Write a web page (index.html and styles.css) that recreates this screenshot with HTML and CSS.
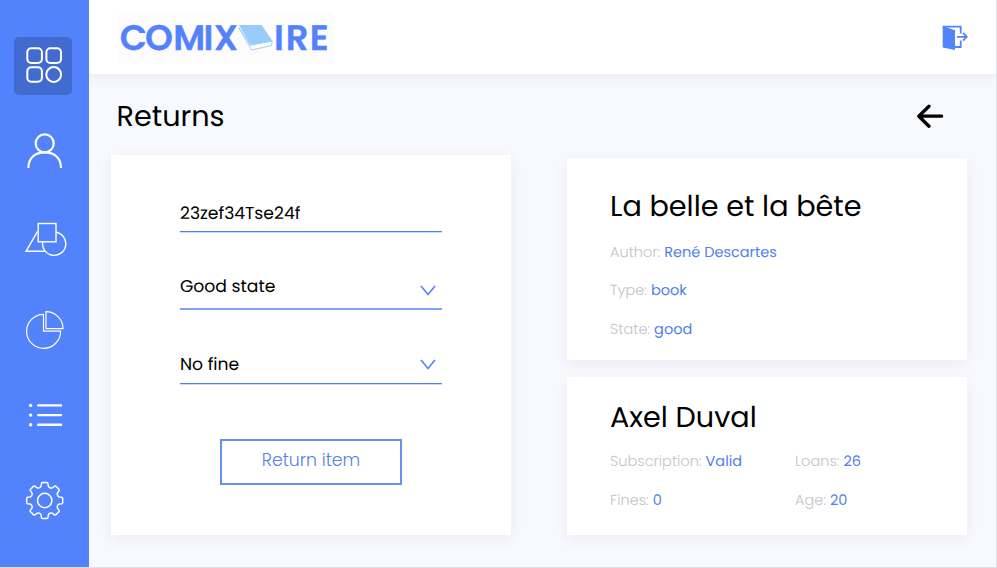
FILE: index.html
```html
<!DOCTYPE html>
<html lang="en">
<head>
<meta charset="utf-8">
<title>Comixaire - Returns</title>
<link rel="stylesheet" href="styles.css">
</head>
<body>
<div class="app">
  <nav class="sidebar">
    <a class="nav-item active"><svg viewBox="14 37 58 58"><g stroke-width="2"><rect x="27.3" y="48.3" width="14.6" height="14.6" rx="4"/><rect x="46.4" y="48.3" width="14.6" height="14.6" rx="4"/><rect x="27.3" y="67.2" width="14.6" height="14.6" rx="4"/><circle cx="53.7" cy="74.5" r="7.4"/></g></svg></a>
    <a class="nav-item"><svg viewBox="14 124 58 58"><g stroke-width="2.2"><circle cx="44.7" cy="143.4" r="9"/><path d="M28.4 168C28.4 157.5 35.5 152.3 44.7 152.3S61 157.5 61 168"/></g></svg></a>
    <a class="nav-item"><svg viewBox="14 211 58 58"><g stroke-width="1.4"><rect x="38.2" y="223.5" width="17.8" height="18.3"/><path d="M37.6 231.3L26 251.3H44.8M56 232.3A11.6 11.6 0 1 1 42.7 242"/></g></svg></a>
    <a class="nav-item"><svg viewBox="14 298 58 58"><g stroke-width="1.2"><path d="M43.5 314.3V331.2H60.6A17 17 0 1 1 43.5 314.3Z"/><path d="M46 311.6V328.6H63A17 17 0 0 0 46 311.6Z"/></g></svg></a>
    <a class="nav-item"><svg viewBox="14 385 58 58"><g stroke-width="2.4" stroke-linecap="round"><path d="M38.2 405.4H61M38.2 415.1H61M38.2 424.8H61"/><path stroke-width="3.4" d="M30.6 405.4h.01M30.6 415.1h.01M30.6 424.8h.01"/></g></svg></a>
    <a class="nav-item"><svg viewBox="14 472 58 58"><defs><path id="tooth" d="M-5.28-12.75Q-3.9-13.3-3.6-14.7L-3.2-17.2Q-3-18-2-18H2Q3-18 3.2-17.2L3.6-14.7Q3.9-13.3 5.28-12.75"/></defs><g stroke-width="1.5" transform="translate(44.7 500.5)"><circle r="7.2"/><use href="#tooth"/><use href="#tooth" transform="rotate(45)"/><use href="#tooth" transform="rotate(90)"/><use href="#tooth" transform="rotate(135)"/><use href="#tooth" transform="rotate(180)"/><use href="#tooth" transform="rotate(225)"/><use href="#tooth" transform="rotate(270)"/><use href="#tooth" transform="rotate(315)"/></g></svg></a>
  </nav>
  <div class="content">
    <header class="topbar">
      <svg class="logo" viewBox="119 12 214 52"><text x="119.8 145 173.2 203.4 213.8" y="49.8">COMIX</text><path d="M238.7 27.5L251.6 50L271.3 45.6L272.3 41.2L250.4 45.2Z" fill="#fff" stroke="#8fc2f8" stroke-width=".8"/><path d="M239 25H261.7L272.5 41L250.4 45.2Z" fill="#99cbfb"/><text x="274 285.8 309.8" y="49.8">IRE</text></svg>
      <svg class="logout" viewBox="942 25 26 26"><path d="M942.7 26L955 30.3V50L942.7 47.5Z" fill="#5282fc"/><path d="M942.7 26.6H960.7V33.5M960.7 40.5V47H955M957 36.8H966.5M963 33L966.8 36.8L963 40.6" fill="none" stroke="#5282fc" stroke-width="1.8"/></svg>
    </header>
    <main>
      <div class="heading">
        <h1 class="title">Returns</h1>
        <svg class="back" viewBox="916 104 28 25"><path d="M941.6 116.2H919M929 106.2L918.8 116.2L929 126.2" fill="none" stroke="#000" stroke-width="3.3" stroke-linecap="round" stroke-linejoin="round"/></svg>
      </div>
      <div class="columns">
        <form class="card form">
          <div class="field code"><span>23zef34Tse24f</span></div>
          <div class="field state"><span>Good state</span><svg viewBox="0 0 16 12"><path d="M1 1L8 9.6L15 1"/></svg></div>
          <div class="field fine"><span>No fine</span><svg viewBox="0 0 16 12"><path d="M1 1L8 9.6L15 1"/></svg></div>
          <button class="submit" type="button"><span>Return item</span></button>
        </form>
        <div class="details">
          <section class="card book">
            <h2>La belle et la bête</h2>
            <p class="author">Author: <b>René Descartes</b></p>
            <p>Type: <b>book</b></p>
            <p>State: <b>good</b></p>
          </section>
          <section class="card member">
            <h2>Axel Duval</h2>
            <div class="facts">
              <p>Subscription: <b>Valid</b></p><p>Loans: <b>26</b></p>
              <p>Fines: <b>0</b></p><p>Age: <b>20</b></p>
            </div>
          </section>
        </div>
      </div>
    </main>
  </div>
</div>
</body>
</html>
```

FILE: styles.css
```css
* { box-sizing: border-box; }
body {
  margin: 0;
  font-family: Poppins, Inter, sans-serif;
  text-rendering: geometricPrecision;
  color: #000;
}
h1, h2, p { margin: 0; font-weight: 400; }
svg { display: block; }

.app {
  display: flex;
  width: 997px;
  height: 568px;
  background: #f8f9ff;
  border-right: 1px solid #e2e3e6;
  border-bottom: 1px solid #dfe1e6;
  overflow: hidden;
}
.sidebar {
  width: 89px;
  flex: none;
  padding: 37px 0 0 14px;
  display: flex;
  flex-direction: column;
  gap: 29px;
  background: #5282fc;
}
.nav-item { width: 58px; height: 58px; border-radius: 5px; }
.nav-item svg { width: 58px; height: 58px; fill: none; stroke: #fff; }
.active { background: #426bd0; }

.content { flex: 1; }
.topbar {
  display: flex;
  justify-content: space-between;
  height: 74px;
  padding: 12px 28px 0 30px;
  background: #fff;
  box-shadow: 0 2px 12px rgba(40, 50, 80, .09);
  clip-path: inset(0 0 -20px 0);
}
.logo { width: 214px; height: 52px; background: #fcfcfd; }
.logo text { font: 600 35.5px Poppins, Inter, sans-serif; fill: #5282fc; stroke: #5282fc; stroke-width: .3; }
.logout { width: 26px; height: 26px; margin-top: 13px; }

.heading {
  display: flex;
  justify-content: space-between;
  align-items: center;
  height: 81px;
  padding: 3px 52px 0 28px;
}
.title { font-size: 28.7px; line-height: 40px; margin: 2px 0 0 -0.5px; }
.back { width: 28px; height: 25px; }

.columns { display: flex; gap: 56px; padding-left: 22px; }
.card { width: 400px; background: #fff; box-shadow: 0 4px 14px rgba(40, 40, 60, .06); }
.form { height: 380px; padding: 43px 69px 0; }
.field {
  display: flex;
  justify-content: space-between;
  width: 262px;
  border-bottom: 1px solid #4f80ea;
  box-shadow: 0 1px 0 #cfdcf9;
  font-size: 17.2px;
  line-height: 30px;
}
.code { height: 34px; padding-top: 1px; }
.state { height: 38px; margin-top: 40px; border-bottom: 2px solid #7fa3f6; box-shadow: none; }
.fine { height: 36px; margin-top: 38px; }
.fine span { padding-top: 2px; }
.field svg { width: 16px; height: 12px; margin: 13px 6px 0 0; fill: none; stroke: #5282fc; stroke-width: 1.6; }
.fine svg { margin-top: 11px; }
.submit {
  display: block;
  width: 182px;
  height: 46px;
  margin: 55px 0 0 40px;
  padding: 0 0 4px;
  border: 2px solid #6690ef;
  background: #fff;
  color: #5282e8;
  font: inherit;
  font-size: 17.3px;
  font-weight: 300;
}

.details { display: flex; flex-direction: column; gap: 17px; padding-top: 3px; }
.book { height: 202px; padding: 28px 43px 0; }
.member { height: 158px; padding: 20px 43px 0; }
h2 { font-size: 28.7px; line-height: 42px; }
p { font-size: 14.5px; line-height: 20px; color: #c4c4c6; font-weight: 300; white-space: nowrap; }
b { font-weight: 400; color: #5282e8; }
.book p { margin-bottom: 19px; }
.book .author { margin: 15px 0 18px; }
.facts { display: grid; grid-template-columns: 185px 1fr; row-gap: 19px; margin-top: 13px; }
```
